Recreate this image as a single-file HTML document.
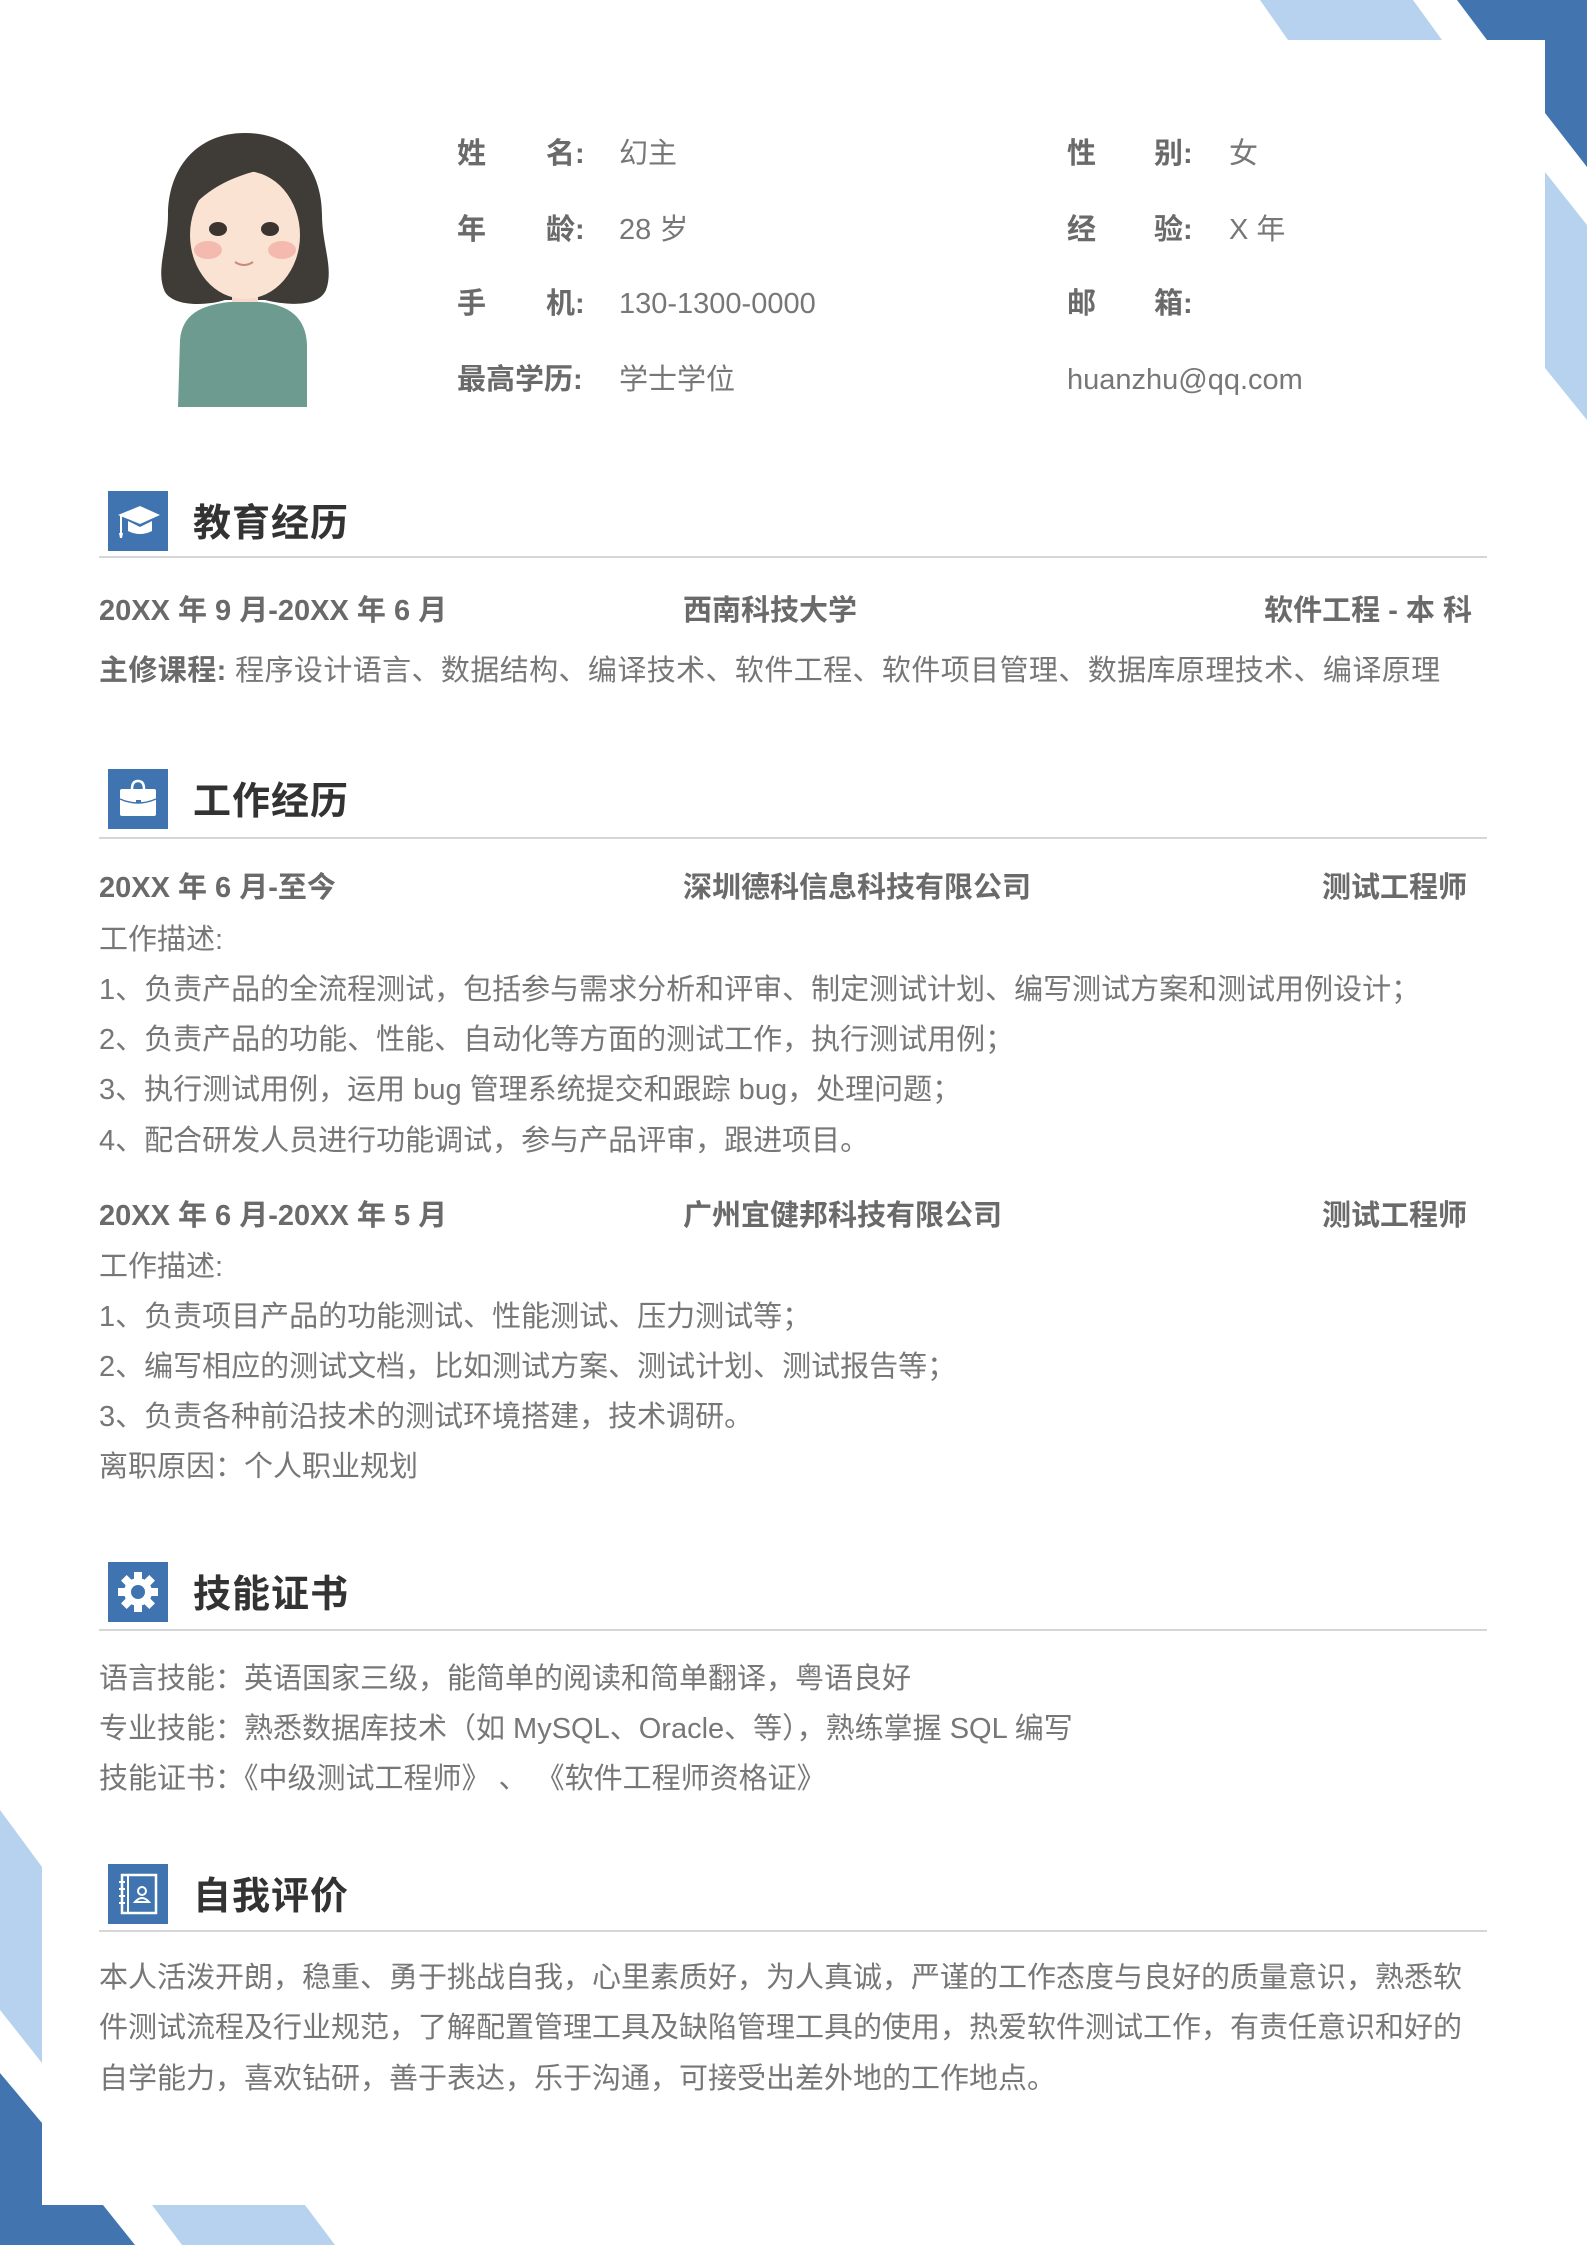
<!DOCTYPE html>
<html><head><meta charset="utf-8">
<style>
*{margin:0;padding:0;box-sizing:border-box}
body{width:1587px;height:2245px;position:relative;background:#fff;overflow:hidden;font-family:"Liberation Sans","Noto Sans CJK SC",sans-serif;color:#777}
.a{position:absolute;white-space:nowrap;line-height:1}
.lb{font-size:29px;font-weight:bold;color:#6a6a6a}
.v{font-size:29px;color:#777}
.t{font-size:29px;color:#777}
.b{font-size:29px;font-weight:bold;color:#6a6a6a}
.h{font-size:38px;font-weight:bold;color:#333;letter-spacing:1px}
.ic{position:absolute;left:108px;width:60px;height:60px;background:#3f74b0}
.ln{position:absolute;left:99px;width:1388px;height:2px;background:#d6d6d6}
</style></head><body>
<svg class="a" style="left:0;top:0" width="1587" height="2245">
<polygon points="1260,0 1413,0 1442,40 1288,40" fill="#b7d2ee"/>
<polygon points="1457,0 1587,0 1587,167 1545,113 1545,40 1487,40" fill="#4275b0"/>
<polygon points="1545,172 1587,225 1587,420 1545,368" fill="#b7d2ee"/>
<polygon points="0,1810 42,1867 42,2063 0,2010" fill="#b7d2ee"/>
<polygon points="0,2073 42,2123 42,2205 103,2205 135,2245 0,2245" fill="#4275b0"/>
<polygon points="152,2205 305,2205 335,2245 182,2245" fill="#b7d2ee"/>
<path d="M245,133 C195,133 168,170 168,215 C168,245 155,270 165,292 C175,308 210,305 225,300 L265,300 C285,305 318,308 326,290 C334,268 322,245 322,215 C322,170 295,133 245,133Z" fill="#3f3b36"/>
<rect x="232" y="280" width="26" height="25" fill="#f6d9c9"/>
<ellipse cx="245" cy="235" rx="55" ry="64" fill="#fbe3d3"/>
<path d="M190,210 C200,165 240,160 260,170 C240,175 210,185 190,210Z" fill="#3f3b36"/>
<ellipse cx="218" cy="229" rx="9" ry="7" fill="#3b3430"/>
<ellipse cx="270" cy="229" rx="9" ry="7" fill="#3b3430"/>
<ellipse cx="208" cy="250" rx="14" ry="9" fill="#f2a8a0" opacity=".7"/>
<ellipse cx="282" cy="250" rx="14" ry="9" fill="#f2a8a0" opacity=".7"/>
<path d="M235,262 Q244,268 253,262" stroke="#c98a7a" stroke-width="2" fill="none"/>
<path d="M178,407 L180,340 C182,315 200,305 230,302 L260,302 C290,305 306,318 307,345 L307,407Z" fill="#6e9b8f"/>
</svg>
<div class="a lb" style="left:457px;top:140px">姓</div><div class="a lb" style="left:546px;top:140px">名:</div>
<div class="a v" style="left:619px;top:140px">幻主</div>
<div class="a lb" style="left:1067px;top:140px">性</div><div class="a lb" style="left:1154px;top:140px">别:</div>
<div class="a v" style="left:1229px;top:140px">女</div>
<div class="a lb" style="left:457px;top:216px">年</div><div class="a lb" style="left:546px;top:216px">龄:</div>
<div class="a v" style="left:619px;top:216px">28 岁</div>
<div class="a lb" style="left:1067px;top:216px">经</div><div class="a lb" style="left:1154px;top:216px">验:</div>
<div class="a v" style="left:1229px;top:216px">X 年</div>
<div class="a lb" style="left:457px;top:290px">手</div><div class="a lb" style="left:546px;top:290px">机:</div>
<div class="a v" style="left:619px;top:290px">130-1300-0000</div>
<div class="a lb" style="left:1067px;top:290px">邮</div><div class="a lb" style="left:1154px;top:290px">箱:</div>
<div class="a lb" style="left:457px;top:366px">最高学历:</div>
<div class="a v" style="left:619px;top:366px">学士学位</div>
<div class="a v" style="left:1067px;top:366px">huanzhu@qq.com</div>

<div class="ic" style="top:491px"><svg width="60" height="60"><path d="M10,24 L32,15 L52,24 L32,33Z" fill="#fff"/><path d="M20,30 L20,40 Q32,46 44,40 L44,30 L32,36Z" fill="#fff"/><path d="M13,25 L13,42" stroke="#fff" stroke-width="2"/><path d="M11,42 L15,42 L14,47 L12,47Z" fill="#fff"/></svg></div>
<div class="a h" style="left:193px;top:505px">教育经历</div>
<div class="ln" style="top:556px"></div>
<div class="a b" style="left:99px;top:597px">20XX 年 9 月-20XX 年 6 月</div>
<div class="a b" style="left:683px;top:597px">西南科技大学</div>
<div class="a b" style="right:115px;top:597px">软件工程 - 本 科</div>
<div class="a t" style="left:99px;top:657px;letter-spacing:0.4px"><b style="color:#6a6a6a">主修课程:</b> 程序设计语言、数据结构、编译技术、软件工程、软件项目管理、数据库原理技术、编译原理</div>

<div class="ic" style="top:769px"><svg width="60" height="60"><path d="M24,20 Q24,12 30,12 Q36,12 36,20" stroke="#fff" stroke-width="2.5" fill="none"/><rect x="12" y="20" width="36" height="27" rx="2" fill="#fff"/><path d="M12,30 Q30,38 48,30" stroke="#3f74b0" stroke-width="1.5" fill="none"/><rect x="28" y="31" width="5" height="3" fill="#3f74b0"/></svg></div>
<div class="a h" style="left:193px;top:783px">工作经历</div>
<div class="ln" style="top:837px"></div>
<div class="a b" style="left:99px;top:874px">20XX 年 6 月-至今</div>
<div class="a b" style="left:683px;top:874px">深圳德科信息科技有限公司</div>
<div class="a b" style="right:120px;top:874px">测试工程师</div>
<div class="a t" style="left:99px;top:926px">工作描述:</div>
<div class="a t" style="left:99px;top:976px">1、负责产品的全流程测试，包括参与需求分析和评审、制定测试计划、编写测试方案和测试用例设计；</div>
<div class="a t" style="left:99px;top:1026px">2、负责产品的功能、性能、自动化等方面的测试工作，执行测试用例；</div>
<div class="a t" style="left:99px;top:1076px">3、执行测试用例，运用 bug 管理系统提交和跟踪 bug，处理问题；</div>
<div class="a t" style="left:99px;top:1127px">4、配合研发人员进行功能调试，参与产品评审，跟进项目。</div>
<div class="a b" style="left:99px;top:1202px">20XX 年 6 月-20XX 年 5 月</div>
<div class="a b" style="left:683px;top:1202px">广州宜健邦科技有限公司</div>
<div class="a b" style="right:120px;top:1202px">测试工程师</div>
<div class="a t" style="left:99px;top:1253px">工作描述:</div>
<div class="a t" style="left:99px;top:1303px">1、负责项目产品的功能测试、性能测试、压力测试等；</div>
<div class="a t" style="left:99px;top:1353px">2、编写相应的测试文档，比如测试方案、测试计划、测试报告等；</div>
<div class="a t" style="left:99px;top:1403px">3、负责各种前沿技术的测试环境搭建，技术调研。</div>
<div class="a t" style="left:99px;top:1453px">离职原因：个人职业规划</div>

<div class="ic" style="top:1562px"><svg width="60" height="60"><g transform="translate(30,30)" fill="#fff"><circle r="14"/><g id="tth"><rect x="-4" y="-20" width="8" height="8"/></g><use href="#tth" transform="rotate(45)"/><use href="#tth" transform="rotate(90)"/><use href="#tth" transform="rotate(135)"/><use href="#tth" transform="rotate(180)"/><use href="#tth" transform="rotate(225)"/><use href="#tth" transform="rotate(270)"/><use href="#tth" transform="rotate(315)"/><circle r="7" fill="#3f74b0"/></g></svg></div>
<div class="a h" style="left:193px;top:1576px">技能证书</div>
<div class="ln" style="top:1629px"></div>
<div class="a t" style="left:99px;top:1665px">语言技能：英语国家三级，能简单的阅读和简单翻译，粤语良好</div>
<div class="a t" style="left:99px;top:1715px">专业技能：熟悉数据库技术（如 MySQL、Oracle、等），熟练掌握 SQL 编写</div>
<div class="a t" style="left:99px;top:1765px">技能证书：《中级测试工程师》 、 《软件工程师资格证》</div>

<div class="ic" style="top:1864px"><svg width="60" height="60"><rect x="14" y="11" width="34" height="38" stroke="#fff" stroke-width="2.5" fill="none"/><g stroke="#fff" stroke-width="2"><path d="M11,18h6M11,25h6M11,32h6M11,39h6"/><path d="M20,11v38"/></g><circle cx="34" cy="27" r="4" stroke="#fff" stroke-width="2" fill="none"/><path d="M27,38 Q34,30 41,38Z" stroke="#fff" stroke-width="2" fill="none"/></svg></div>
<div class="a h" style="left:193px;top:1878px">自我评价</div>
<div class="ln" style="top:1930px"></div>
<div class="a t" style="left:99px;top:1964px">本人活泼开朗，稳重、勇于挑战自我，心里素质好，为人真诚，严谨的工作态度与良好的质量意识，熟悉软</div>
<div class="a t" style="left:99px;top:2014px">件测试流程及行业规范，了解配置管理工具及缺陷管理工具的使用，热爱软件测试工作，有责任意识和好的</div>
<div class="a t" style="left:99px;top:2065px">自学能力，喜欢钻研，善于表达，乐于沟通，可接受出差外地的工作地点。</div>
</body></html>
